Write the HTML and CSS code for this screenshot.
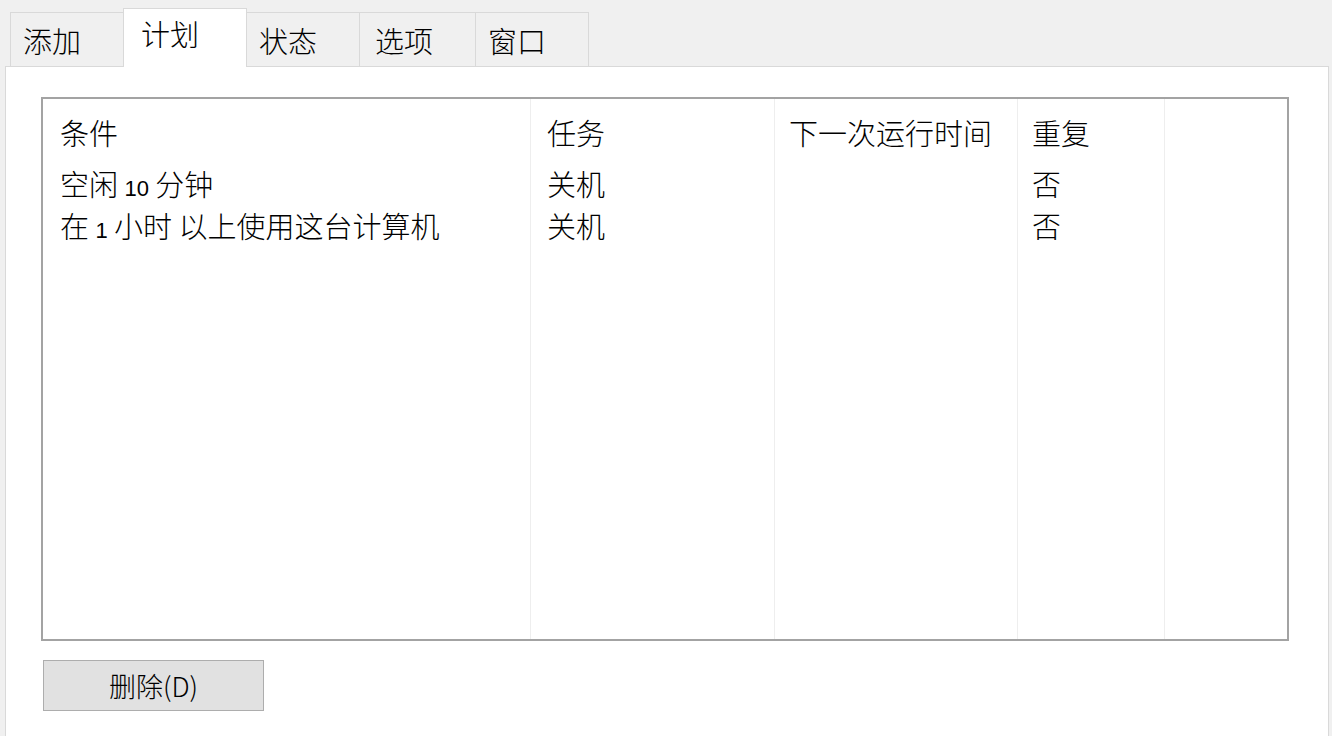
FILE: index.html
```html
<!DOCTYPE html>
<html lang="zh-CN">
<head>
<meta charset="utf-8">
<title>计划</title>
<link rel="stylesheet" href="styles.css">
</head>
<body>
<div class="tabs">
  <div class="tab">添加</div>
  <div class="tab active">计划</div>
  <div class="tab">状态</div>
  <div class="tab wide">选项</div>
  <div class="tab">窗口</div>
</div>
<div class="panel">
  <div class="list">
    <div class="col c1">
      <div class="head">条件</div>
      <div class="cell">空闲 <span class="num">10</span> 分钟</div>
      <div class="cell">在 <span class="num">1</span> 小时 以上使用这台计算机</div>
    </div>
    <div class="col c2">
      <div class="head">任务</div>
      <div class="cell">关机</div>
      <div class="cell">关机</div>
    </div>
    <div class="col c3">
      <div class="head">下一次运行时间</div>
    </div>
    <div class="col c4">
      <div class="head">重复</div>
      <div class="cell">否</div>
      <div class="cell">否</div>
    </div>
    <div class="col c5"></div>
  </div>
  <div class="actions">
    <button class="btn" type="button">删除(D)</button>
  </div>
</div>
</body>
</html>
```

FILE: styles.css
```css
html, body {
  margin: 0;
  padding: 0;
}
body {
  background: #f0f0f0;
  font-family: "Noto Sans CJK SC", "Noto Sans", sans-serif;
  font-weight: 300;
  color: #000;
  width: 1332px;
  height: 736px;
  overflow: hidden;
}
.tabs {
  display: flex;
  align-items: flex-end;
  height: 66px;
  padding-left: 11px;
  box-sizing: border-box;
}
.tab {
  box-sizing: border-box;
  width: 114px;
  height: 54px;
  margin-left: -1px;
  border: 1px solid #d9d9d9;
  border-bottom: none;
  background: #f0f0f0;
  font-size: 29px;
  line-height: 36px;
  padding-top: 9px;
  padding-left: 12px;
  white-space: nowrap;
}
.tab.wide {
  width: 117px;
  padding-left: 15px;
}
.tab.active {
  width: 124px;
  height: 59px;
  margin-bottom: -1px;
  background: #fff;
  padding-top: 6px;
  padding-left: 17px;
  position: relative;
  z-index: 1;
}
.panel {
  box-sizing: border-box;
  margin-left: 5px;
  width: 1324px;
  height: 700px;
  border: 1px solid #d9d9d9;
  background: #fff;
  padding: 30px 0 0 35px;
}
.list {
  box-sizing: border-box;
  width: 1248px;
  height: 544px;
  border: 2px solid #a3a3a3;
  display: flex;
  background: #fff;
}
.col {
  box-sizing: border-box;
  border-right: 1px solid #eeeeee;
  padding-top: 12px;
  padding-left: 15px;
  font-size: 29px;
  line-height: 42px;
  white-space: nowrap;
}
.c1 { width: 488px; padding-left: 17px; }
.c2 { width: 244px; padding-left: 16px; }
.c3 { width: 243px; padding-left: 14px; }
.c4 { width: 147px; padding-left: 14px; }
.c5 { flex: 1; border-right: none; }
.head {
  height: 42px;
  margin-bottom: 9px;
}
.cell {
  height: 42px;
}
.num {
  font-size: 22px;
  line-height: 1;
  font-family: "Liberation Sans", sans-serif;
  font-weight: 400;
}
.actions {
  padding: 19px 0 0 2px;
}
.btn {
  box-sizing: border-box;
  width: 221px;
  height: 51px;
  background: #e1e1e1;
  border: 1px solid #adadad;
  border-radius: 0;
  font-family: "Noto Sans CJK SC", "Noto Sans", sans-serif;
  font-weight: 300;
  font-size: 27px;
  color: #000;
  padding: 0;
}
```
